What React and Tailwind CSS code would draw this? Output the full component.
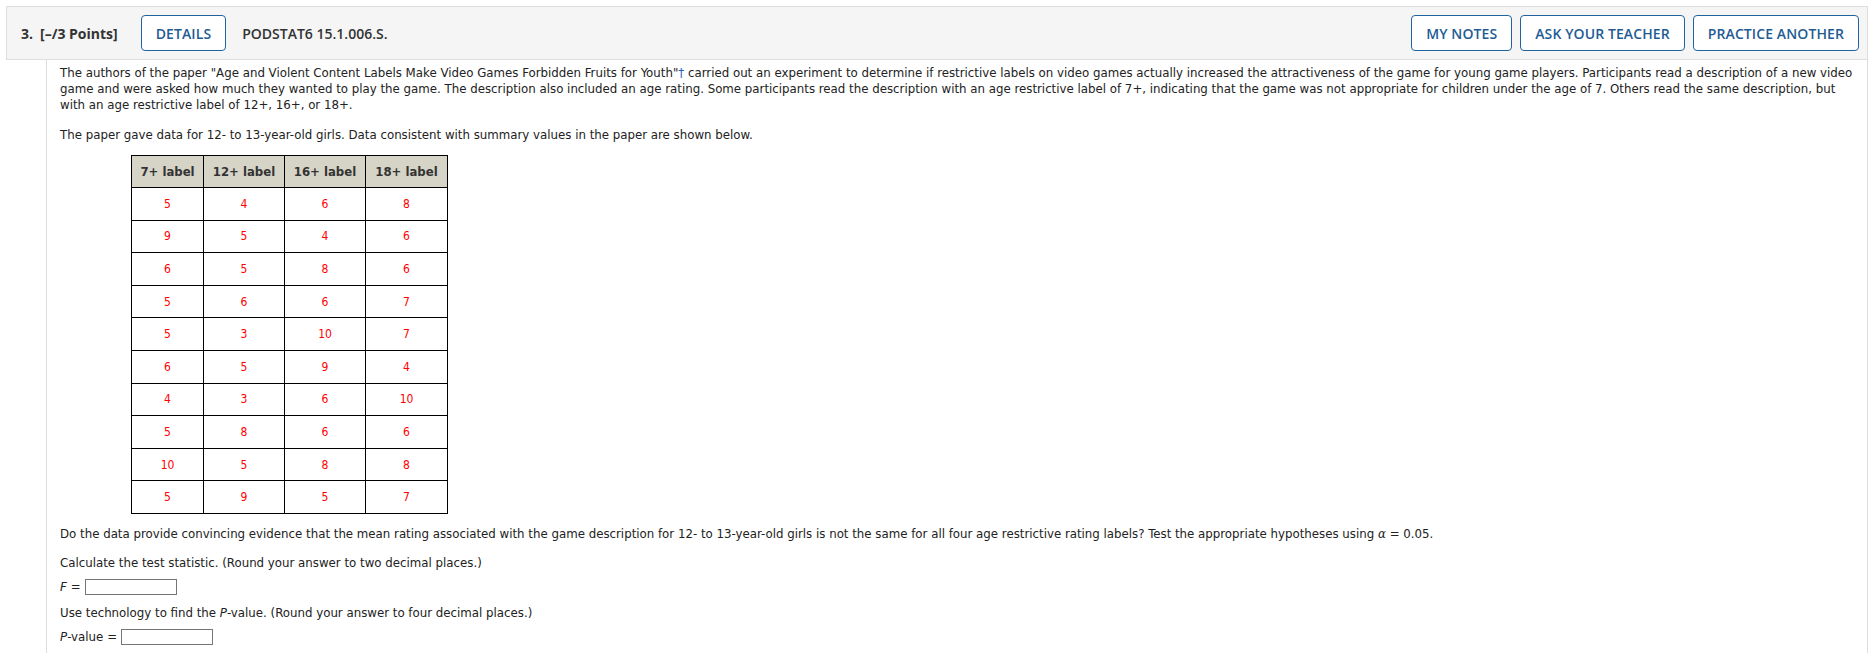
import React from "react";

const rows = [
  [5, 4, 6, 8],
  [9, 5, 4, 6],
  [6, 5, 8, 6],
  [5, 6, 6, 7],
  [5, 3, 10, 7],
  [6, 5, 9, 4],
  [4, 3, 6, 10],
  [5, 8, 6, 6],
  [10, 5, 8, 8],
  [5, 9, 5, 7],
];

const headers = ["7+ label", "12+ label", "16+ label", "18+ label"];
const colW = ["w-[72px]", "w-[81px]", "w-[81px]", "w-[82px]"];

function Btn({ children }) {
  return (
    <button className="h-[36px] px-[14px] rounded-[4px] border border-[#1f63a0] bg-white text-[#1f5c94] text-[14px] font-semibold tracking-[0.1px] [font-family:'Open_Sans',sans-serif]">
      {children}
    </button>
  );
}

export default function App() {
  const body = "[font-family:'DejaVu_Sans_Condensed','DejaVu_Sans',sans-serif] [font-stretch:condensed]";
  return (
    <div className="w-[1876px] h-[653px] bg-white pt-[6px] pl-[6px] overflow-hidden">
      <div className="w-[1862px] h-[54px] bg-[#f5f5f5] border border-[#dddddd] flex items-center pl-[14px] pr-[8px] [font-family:'Open_Sans',sans-serif]">
        <span className="text-[14px] font-bold text-[#333]">3.</span>
        <span className="ml-[7px] text-[14px] font-bold text-[#333]">[–/3 Points]</span>
        <div className="ml-[23px]">
          <Btn>DETAILS</Btn>
        </div>
        <span className="ml-[16px] text-[14px] font-semibold text-[#333]">PODSTAT6 15.1.006.S.</span>
        <div className="ml-auto flex gap-[8px]">
          <Btn>MY NOTES</Btn>
          <Btn>ASK YOUR TEACHER</Btn>
          <Btn>PRACTICE ANOTHER</Btn>
        </div>
      </div>
      <div className={`ml-[40px] w-[1822px] h-[600px] border-l border-r border-[#dddddd] pl-[13px] pr-[6px] pt-[5px] text-[13.12px] leading-[16px] text-[#222] ${body}`}>
        <p>
          The authors of the paper "Age and Violent Content Labels Make Video Games Forbidden Fruits for Youth"<span className="text-[#1f63c0]">†</span> carried out an experiment to determine if restrictive labels on video games actually increased the attractiveness of the game for young game players. Participants read a description of a new video game and were asked how much they wanted to play the game. The description also included an age rating. Some participants read the description with an age restrictive label of 7+, indicating that the game was not appropriate for children under the age of 7. Others read the same description, but with an age restrictive label of 12+, 16+, or 18+.
        </p>
        <p className="mt-[14px]">
          The paper gave data for 12- to 13-year-old girls. Data consistent with summary values in the paper are shown below.
        </p>
        <div className="mt-[12px] ml-[71px]">
          <table className="border-collapse">
            <thead>
              <tr className="bg-[#d6d3c7]">
                {headers.map((h, i) => (
                  <th key={h} className={`${colW[i]} h-[32px] border border-black text-[13px] font-bold text-[#333] text-center p-0`}>
                    {h}
                  </th>
                ))}
              </tr>
            </thead>
            <tbody>
              {rows.map((r, ri) => (
                <tr key={ri}>
                  {r.map((v, ci) => (
                    <td key={ci} className="h-[32.6px] border border-black text-center text-[12px] text-[#ff0000] p-0">
                      {v}
                    </td>
                  ))}
                </tr>
              ))}
            </tbody>
          </table>
        </div>
        <p className="mt-[12px]">
          Do the data provide convincing evidence that the mean rating associated with the game description for 12- to 13-year-old girls is not the same for all four age restrictive rating labels? Test the appropriate hypotheses using <i className="[font-family:'DejaVu_Serif',serif]">α</i> = 0.05.
        </p>
        <p className="mt-[13px]">Calculate the test statistic. (Round your answer to two decimal places.)</p>
        <div className="mt-[8px] flex items-center">
          <i>F</i>
          <span className="ml-[4px]">=</span>
          <input className="ml-[4px] w-[92px] h-[16px] border border-[#767676] bg-white" />
        </div>
        <p className="mt-[10px]">Use technology to find the <i>P</i>-value. (Round your answer to four decimal places.)</p>
        <div className="mt-[8px] flex items-center">
          <span><i>P</i>-value</span>
          <span className="ml-[4px]">=</span>
          <input className="ml-[4px] w-[92px] h-[16px] border border-[#767676] bg-white" />
        </div>
      </div>
    </div>
  );
}
